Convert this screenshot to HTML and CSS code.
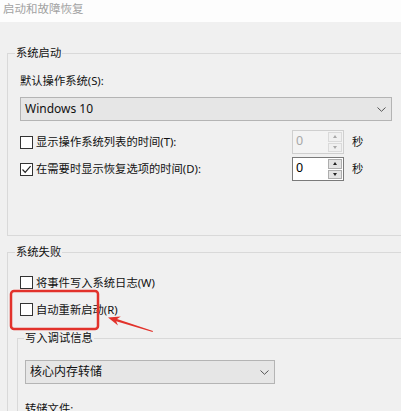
FILE: index.html
```html
<!DOCTYPE html>
<html lang="zh-CN">
<head>
<meta charset="utf-8">
<title>启动和故障恢复</title>
<link rel="stylesheet" href="styles.css">
</head>
<body>
<div class="titlebar">启动和故障恢复</div>
<main class="content">
  <fieldset class="group group-boot">
    <legend class="legend">系统启动</legend>
    <div class="label-line">默认操作系统(S):</div>
    <div class="select select-os">
      <span class="select-text">Windows 10</span>
      <svg class="chev" width="9" height="5" viewBox="0 0 9 5"><path d="M0.5 0.5 L4.5 4.3 L8.5 0.5" fill="none" stroke="#555" stroke-width="1"/></svg>
    </div>
    <div class="row row-spin first-spin">
      <span class="check"></span>
      <span class="row-text">显示操作系统列表的时间(T):</span>
      <div class="spin disabled">
        <span class="spin-val">0</span>
        <span class="spin-btns">
          <span class="spin-btn"><span class="tri up"></span></span>
          <span class="spin-btn"><span class="tri down"></span></span>
        </span>
      </div>
      <span class="unit">秒</span>
    </div>
    <div class="row row-spin second-spin">
      <span class="check checked"><svg width="11" height="11" viewBox="0 0 11 11"><path d="M1.5 5.5 L4.2 8.3 L9.6 2.2" fill="none" stroke="#222" stroke-width="1.2"/></svg></span>
      <span class="row-text">在需要时显示恢复选项的时间(D):</span>
      <div class="spin">
        <span class="spin-val">0</span>
        <span class="spin-btns">
          <span class="spin-btn"><span class="tri up"></span></span>
          <span class="spin-btn"><span class="tri down"></span></span>
        </span>
      </div>
      <span class="unit">秒</span>
    </div>
  </fieldset>

  <fieldset class="group group-fail">
    <legend class="legend">系统失败</legend>
    <div class="row row-check first-check">
      <span class="check"></span>
      <span class="row-text">将事件写入系统日志(W)</span>
    </div>
    <div class="row row-check second-check">
      <span class="check"></span>
      <span class="row-text">自动重新启动(R)</span>
    </div>
    <fieldset class="group group-debug">
      <legend class="legend legend-debug">写入调试信息</legend>
      <div class="select select-dump">
        <span class="select-text">核心内存转储</span>
        <svg class="chev" width="9" height="5" viewBox="0 0 9 5"><path d="M0.5 0.5 L4.5 4.3 L8.5 0.5" fill="none" stroke="#555" stroke-width="1"/></svg>
      </div>
      <div class="label-line dump-file">转储文件:</div>
    </fieldset>
  </fieldset>
</main>
<svg class="annotation" width="401" height="411" viewBox="0 0 401 411">
  <rect x="11" y="291" width="87" height="38" rx="3" ry="3" fill="none" stroke="#e2322b" stroke-width="2.5"/>
  <polygon points="108,317.5 120.8,316.6 117,319.1 153,331.1 152.6,332.1 116.2,321.3 118,325.6" fill="#e2322b"/>
</svg>
</body>
</html>
```
FILE: styles.css
```css
html, body {
  margin: 0;
  padding: 0;
}
body {
  width: 401px;
  height: 411px;
  overflow: hidden;
  position: relative;
  background: #f0f0f0;
  font-family: "Segoe UI", "Noto Sans", "Noto Sans CJK SC", sans-serif;
  font-size: 11.3px;
  color: #111;
}
.titlebar {
  height: 22px;
  line-height: 17px;
  padding-left: 3px;
  background: #fdfdfd;
  color: #a2a2a2;
  font-size: 11.5px;
  box-sizing: border-box;
}
.content {
  display: block;
}
.group {
  margin: 0;
  border: 1px solid #d9d9d9;
  border-right: none;
  min-width: 0;
}
.legend {
  padding: 0 1px;
  margin-left: -5px;
  line-height: 14px;
  height: 14px;
}
.group-boot {
  margin: 24px -19px 0 7px;
  padding: 0 28px 54px 12px;
}
.group-fail {
  margin: 9px -19px 0 7px;
  padding: 0 28px 40px 12px;
}
.group-debug {
  margin: 13.5px -60px 0 -3px;
  padding: 0 20px 20px 7px;
}
.legend-debug {
  margin-left: -1px;
}
.label-line {
  line-height: 16px;
  margin-top: 13px;
}
.select {
  display: flex;
  align-items: center;
  justify-content: space-between;
  box-sizing: border-box;
  height: 24px;
  border: 1px solid #b4b4b4;
  background: #e6e6e6;
  padding: 0 5px 0 4px;
}
.select-os {
  margin-top: 8px;
  width: 100%;
}
.select-dump {
  margin-top: 15px;
  width: 250px;
}
.select-text {
  font-size: 12px;
  line-height: 16px;
}
.chev {
  display: block;
}
.row {
  display: flex;
  align-items: center;
}
.row-spin {
  height: 24px;
}
.first-spin {
  margin-top: 9px;
}
.second-spin {
  margin-top: 3px;
}
.row-check {
  height: 16px;
}
.first-check {
  margin-top: 15.5px;
}
.second-check {
  margin-top: 11px;
}
.check {
  flex: none;
  box-sizing: border-box;
  width: 13px;
  height: 13px;
  border: 1px solid #333;
  background: #fff;
  display: flex;
  align-items: center;
  justify-content: center;
  margin-right: 3px;
}
.check svg {
  display: block;
}
.row-text {
  flex: 1;
  line-height: 16px;
  white-space: nowrap;
}
.spin {
  flex: none;
  box-sizing: border-box;
  width: 52px;
  height: 24px;
  display: flex;
  border: 1px solid #7a7a7a;
  background: #fff;
}
.spin.disabled {
  border-color: #cfcfcf;
  background: #f3f3f3;
}
.spin-val {
  flex: 1;
  padding-left: 3px;
  font-size: 12.5px;
  line-height: 20px;
  color: #000;
}
.spin.disabled .spin-val {
  color: #a8a8a8;
}
.spin-btns {
  flex: none;
  width: 14px;
  display: flex;
  flex-direction: column;
  gap: 1px;
  padding: 1px 1px 1px 0;
}
.spin-btn {
  flex: 1;
  box-sizing: border-box;
  border: 1px solid #adadad;
  background: #e3e3e3;
  display: flex;
  align-items: center;
  justify-content: center;
}
.spin.disabled .spin-btn {
  border-color: #dadada;
  background: #f0f0f0;
}
.tri {
  width: 0;
  height: 0;
  border-left: 2.5px solid transparent;
  border-right: 2.5px solid transparent;
}
.tri.up {
  border-bottom: 3px solid #222;
}
.tri.down {
  border-top: 3px solid #222;
}
.spin.disabled .tri.up {
  border-bottom-color: #a8a8a8;
}
.spin.disabled .tri.down {
  border-top-color: #a8a8a8;
}
.unit {
  flex: none;
  width: 12px;
  margin-left: 8px;
  margin-right: 28px;
  line-height: 16px;
}
.dump-file {
  margin-top: 17px;
}
.annotation {
  position: absolute;
  left: 0;
  top: 0;
  pointer-events: none;
}
```
